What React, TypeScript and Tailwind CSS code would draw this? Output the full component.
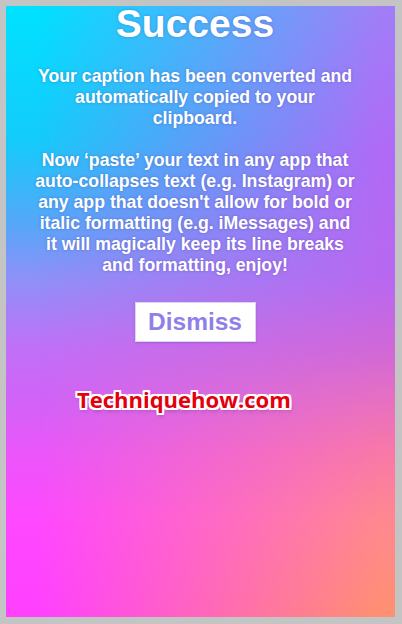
import React from 'react';

const SANS = "font-['Liberation_Sans','Helvetica_Neue',Arial,sans-serif]";

/**
 * "Success" confirmation sheet with a gradient backdrop and watermark
 */
export default function App() {
  return (
    <div className="flex h-[624px] w-[402px] bg-[#c4c4c4] pt-[6px] pl-[6px] pr-[7px] pb-[7px]">
      <div className="grid flex-1 overflow-hidden">
        {/* Gradient: left column */}
        <div className="col-start-1 row-start-1 bg-[linear-gradient(to_bottom,#00e2ff_0%,#14cbfb_22%,#58a6f9_36%,#9090f8_45%,#c070f8_56%,#d262f8_65%,#ea56fa_73%,#ff48ff_84%,#ff40ff_100%)]" />
        {/* Gradient: right column, faded in across the width */}
        <div className="col-start-1 row-start-1 bg-[linear-gradient(to_bottom,#a07ef8_0%,#b06af6_24%,#b868f0_45%,#d068d8_56%,#e870c0_65%,#f878a8_73%,#ff8890_84%,#ff9070_100%)] [mask-image:linear-gradient(to_right,transparent_8%,black_96%)]" />

        {/* Content (relative so it paints above the masked layer) */}
        <div className={`relative col-start-1 row-start-1 flex flex-col ${SANS}`}>
          <div className="flex flex-col items-center pr-[11px] text-white [text-shadow:0_0_3px_rgba(60,40,120,0.35)]">
            <h1 className="text-[39px] leading-[36px] font-bold">Success</h1>

            <p className="mt-[24px] text-center text-[17.7px] leading-[21px] font-bold whitespace-nowrap">
              Your caption has been converted and
              <br />
              automatically copied to your
              <br />
              clipboard.
            </p>

            <p className="mt-[21px] text-center text-[17.7px] leading-[21px] font-bold whitespace-nowrap">
              Now ‘paste’ your text in any app that
              <br />
              auto-collapses text (e.g. Instagram) or
              <br />
              any app that doesn't allow for bold or
              <br />
              italic formatting (e.g. iMessages) and
              <br />
              it will magically keep its line breaks
              <br />
              and formatting, enjoy!
            </p>

            <button className="mt-[26px] flex h-[40px] w-[121px] items-center justify-center border border-[#ddd4f2] bg-white text-[24.5px] font-bold text-[#8f80e8] [text-shadow:none] shadow-[0_1px_2px_rgba(80,40,140,0.25)]">
              Dismiss
            </button>
          </div>

          {/* Watermark */}
          <p className="mt-[43px] pl-[71px] font-['Open_Sans',sans-serif] text-[22px] leading-[28px] font-bold text-[#e2000e] [text-shadow:2px_0_#fff,-2px_0_#fff,0_2px_#fff,0_-2px_#fff,2px_2px_#fff,-2px_-2px_#fff,2px_-2px_#fff,-2px_2px_#fff,1px_3px_4px_rgba(60,0,60,0.35)]">
            Techniquehow.com
          </p>
        </div>
      </div>
    </div>
  );
}
